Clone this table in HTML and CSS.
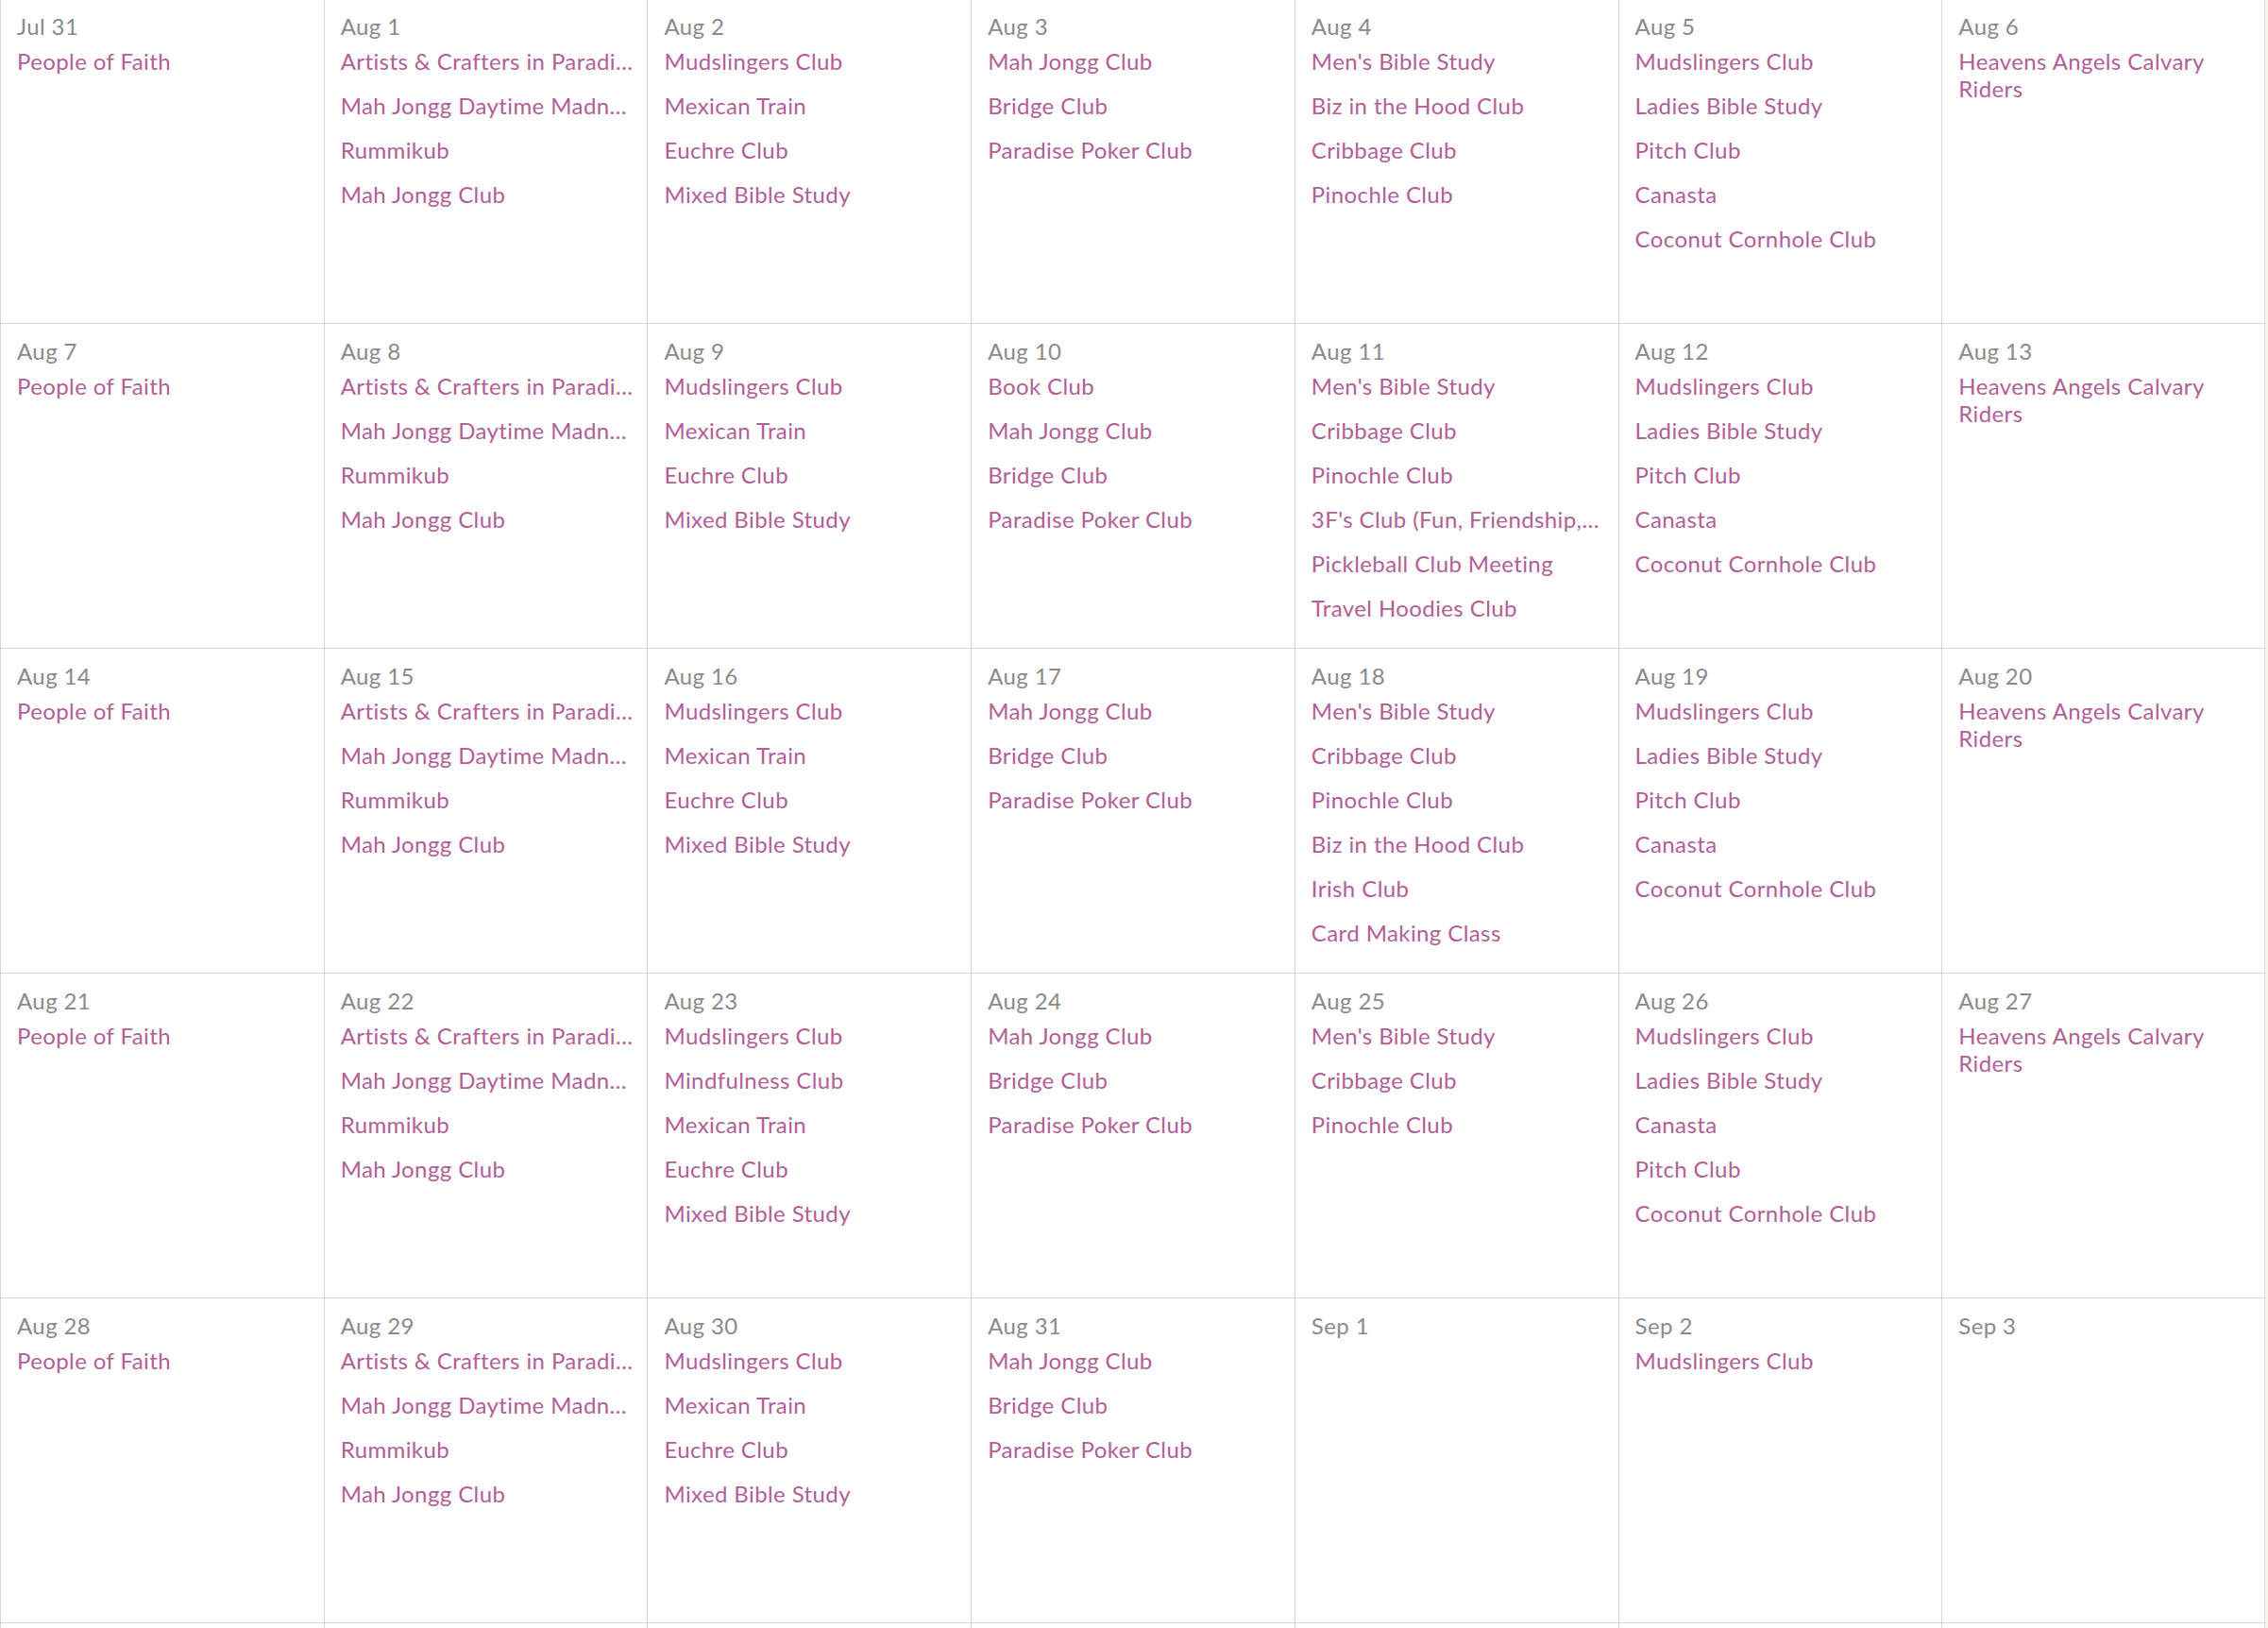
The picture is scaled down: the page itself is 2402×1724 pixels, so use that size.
FILE: index.html
```html
<!DOCTYPE html>
<html lang="en">
<head>
<meta charset="utf-8">
<title>Calendar</title>
<link rel="stylesheet" href="styles.css">
</head>
<body>
<div class="page">
<div class="calendar">
  <div class="day"><div class="date">Jul 31</div><ul class="events"><li>People of Faith</li></ul></div>
  <div class="day"><div class="date">Aug 1</div><ul class="events"><li>Artists &amp; Crafters in Paradi…</li><li>Mah Jongg Daytime Madn…</li><li>Rummikub</li><li>Mah Jongg Club</li></ul></div>
  <div class="day"><div class="date">Aug 2</div><ul class="events"><li>Mudslingers Club</li><li>Mexican Train</li><li>Euchre Club</li><li>Mixed Bible Study</li></ul></div>
  <div class="day"><div class="date">Aug 3</div><ul class="events"><li>Mah Jongg Club</li><li>Bridge Club</li><li>Paradise Poker Club</li></ul></div>
  <div class="day"><div class="date">Aug 4</div><ul class="events"><li>Men's Bible Study</li><li>Biz in the Hood Club</li><li>Cribbage Club</li><li>Pinochle Club</li></ul></div>
  <div class="day"><div class="date">Aug 5</div><ul class="events"><li>Mudslingers Club</li><li>Ladies Bible Study</li><li>Pitch Club</li><li>Canasta</li><li>Coconut Cornhole Club</li></ul></div>
  <div class="day last"><div class="date">Aug 6</div><ul class="events"><li class="wrap">Heavens Angels Calvary Riders</li></ul></div>

  <div class="day"><div class="date">Aug 7</div><ul class="events"><li>People of Faith</li></ul></div>
  <div class="day"><div class="date">Aug 8</div><ul class="events"><li>Artists &amp; Crafters in Paradi…</li><li>Mah Jongg Daytime Madn…</li><li>Rummikub</li><li>Mah Jongg Club</li></ul></div>
  <div class="day"><div class="date">Aug 9</div><ul class="events"><li>Mudslingers Club</li><li>Mexican Train</li><li>Euchre Club</li><li>Mixed Bible Study</li></ul></div>
  <div class="day"><div class="date">Aug 10</div><ul class="events"><li>Book Club</li><li>Mah Jongg Club</li><li>Bridge Club</li><li>Paradise Poker Club</li></ul></div>
  <div class="day"><div class="date">Aug 11</div><ul class="events"><li>Men's Bible Study</li><li>Cribbage Club</li><li>Pinochle Club</li><li>3F's Club (Fun, Friendship,…</li><li>Pickleball Club Meeting</li><li>Travel Hoodies Club</li></ul></div>
  <div class="day"><div class="date">Aug 12</div><ul class="events"><li>Mudslingers Club</li><li>Ladies Bible Study</li><li>Pitch Club</li><li>Canasta</li><li>Coconut Cornhole Club</li></ul></div>
  <div class="day last"><div class="date">Aug 13</div><ul class="events"><li class="wrap">Heavens Angels Calvary Riders</li></ul></div>

  <div class="day"><div class="date">Aug 14</div><ul class="events"><li>People of Faith</li></ul></div>
  <div class="day"><div class="date">Aug 15</div><ul class="events"><li>Artists &amp; Crafters in Paradi…</li><li>Mah Jongg Daytime Madn…</li><li>Rummikub</li><li>Mah Jongg Club</li></ul></div>
  <div class="day"><div class="date">Aug 16</div><ul class="events"><li>Mudslingers Club</li><li>Mexican Train</li><li>Euchre Club</li><li>Mixed Bible Study</li></ul></div>
  <div class="day"><div class="date">Aug 17</div><ul class="events"><li>Mah Jongg Club</li><li>Bridge Club</li><li>Paradise Poker Club</li></ul></div>
  <div class="day"><div class="date">Aug 18</div><ul class="events"><li>Men's Bible Study</li><li>Cribbage Club</li><li>Pinochle Club</li><li>Biz in the Hood Club</li><li>Irish Club</li><li>Card Making Class</li></ul></div>
  <div class="day"><div class="date">Aug 19</div><ul class="events"><li>Mudslingers Club</li><li>Ladies Bible Study</li><li>Pitch Club</li><li>Canasta</li><li>Coconut Cornhole Club</li></ul></div>
  <div class="day last"><div class="date">Aug 20</div><ul class="events"><li class="wrap">Heavens Angels Calvary Riders</li></ul></div>

  <div class="day"><div class="date">Aug 21</div><ul class="events"><li>People of Faith</li></ul></div>
  <div class="day"><div class="date">Aug 22</div><ul class="events"><li>Artists &amp; Crafters in Paradi…</li><li>Mah Jongg Daytime Madn…</li><li>Rummikub</li><li>Mah Jongg Club</li></ul></div>
  <div class="day"><div class="date">Aug 23</div><ul class="events"><li>Mudslingers Club</li><li>Mindfulness Club</li><li>Mexican Train</li><li>Euchre Club</li><li>Mixed Bible Study</li></ul></div>
  <div class="day"><div class="date">Aug 24</div><ul class="events"><li>Mah Jongg Club</li><li>Bridge Club</li><li>Paradise Poker Club</li></ul></div>
  <div class="day"><div class="date">Aug 25</div><ul class="events"><li>Men's Bible Study</li><li>Cribbage Club</li><li>Pinochle Club</li></ul></div>
  <div class="day"><div class="date">Aug 26</div><ul class="events"><li>Mudslingers Club</li><li>Ladies Bible Study</li><li>Canasta</li><li>Pitch Club</li><li>Coconut Cornhole Club</li></ul></div>
  <div class="day last"><div class="date">Aug 27</div><ul class="events"><li class="wrap">Heavens Angels Calvary Riders</li></ul></div>

  <div class="day"><div class="date">Aug 28</div><ul class="events"><li>People of Faith</li></ul></div>
  <div class="day"><div class="date">Aug 29</div><ul class="events"><li>Artists &amp; Crafters in Paradi…</li><li>Mah Jongg Daytime Madn…</li><li>Rummikub</li><li>Mah Jongg Club</li></ul></div>
  <div class="day"><div class="date">Aug 30</div><ul class="events"><li>Mudslingers Club</li><li>Mexican Train</li><li>Euchre Club</li><li>Mixed Bible Study</li></ul></div>
  <div class="day"><div class="date">Aug 31</div><ul class="events"><li>Mah Jongg Club</li><li>Bridge Club</li><li>Paradise Poker Club</li></ul></div>
  <div class="day"><div class="date">Sep 1</div><ul class="events"></ul></div>
  <div class="day"><div class="date">Sep 2</div><ul class="events"><li>Mudslingers Club</li></ul></div>
  <div class="day last"><div class="date">Sep 3</div><ul class="events"></ul></div>

  <div class="day"></div>
  <div class="day"></div>
  <div class="day"></div>
  <div class="day"></div>
  <div class="day"></div>
  <div class="day"></div>
  <div class="day last"></div>
</div>
</div>
</body>
</html>
```

FILE: styles.css
```css
html, body {
  margin: 0;
  padding: 0;
  background: #f8f5ef;
  overflow: hidden;
}

.page {
  width: 2399px;
  height: 1724px;
  overflow: hidden;
  background: #ffffff;
}

.calendar {
  display: grid;
  grid-template-columns: repeat(7, 1fr);
  grid-auto-rows: 344px;
  margin-top: -1px;
  font-family: Lato, "Open Sans", sans-serif;
  font-size: 24px;
  letter-spacing: 0.4px;
}

.day {
  box-sizing: border-box;
  border-left: 1px solid #d6d6d6;
  border-bottom: 1px solid #d6d6d6;
  padding: 14px 6px 0 17px;
  min-width: 0;
  overflow: hidden;
}

.day.last {
  border-right: 1px solid #d6d6d6;
}

.date {
  color: #8a8a8a;
  line-height: 29px;
  margin-bottom: 8px;
}

.events {
  list-style: none;
  margin: 0;
  padding: 0;
}

.events li {
  color: #b25e97;
  line-height: 29px;
  margin-bottom: 18px;
  white-space: nowrap;
  overflow: hidden;
}

.events li.wrap {
  white-space: normal;
}
```
